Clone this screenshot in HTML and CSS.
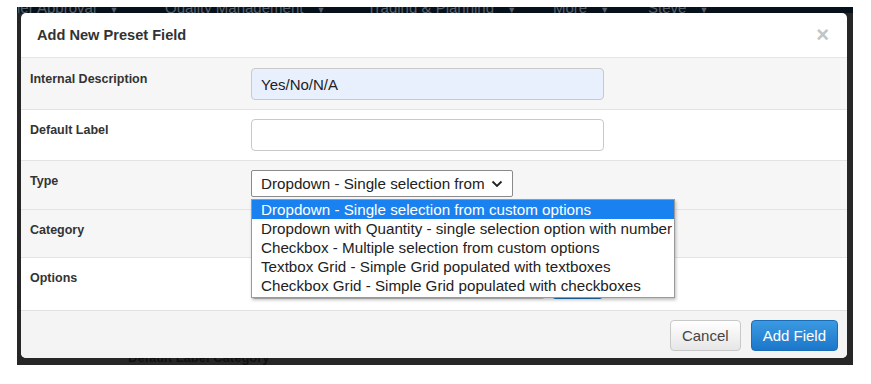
FILE: index.html
```html
<!DOCTYPE html>
<html lang="en">

<head>
  <meta charset="UTF-8">
  <meta name="viewport" content="width=device-width,initial-scale=1.0">
  <title>Add New Preset Field</title>
  <link rel="stylesheet" href="styles.css">
</head>

<body>
  <div class="backdrop">
    <div class="nav">
      <span class="nav-item first">ier Approval <i>&#9660;</i></span>
      <span class="nav-item">Quality Management <i>&#9660;</i></span>
      <span class="nav-item">Trading &amp; Planning <i>&#9660;</i></span>
      <span class="nav-item">More <i>&#9660;</i></span>
      <span class="nav-item">Steve <i>&#9660;</i></span>
    </div>
    <div class="page-behind">Default Label Category</div>

    <div class="modal">
      <div class="modal-header">
        <h4>Add New Preset Field</h4>
        <span class="close">&times;</span>
      </div>

      <div class="modal-body">
        <div class="form-row grey r1">
          <label>Internal Description</label>
          <div><input type="text" class="text-input autofill" value="Yes/No/N/A"></div>
        </div>
        <div class="form-row r2">
          <label>Default Label</label>
          <div><input type="text" class="text-input" value=""></div>
        </div>
        <div class="form-row grey r3">
          <label>Type</label>
          <div>
            <div class="fake-select">
              <span>Dropdown - Single selection from</span>
              <svg width="12" height="8" viewBox="0 0 12 8"><path d="M1.5 1.5 L6 6 L10.5 1.5" fill="none" stroke="#222" stroke-width="1.8"/></svg>
            </div>
          </div>
        </div>
        <div class="form-row grey r4">
          <label>Category</label>
          <div></div>
        </div>
        <div class="form-row r5">
          <label>Options</label>
          <div class="options-line">
            <input type="text" class="text-input short" value="">
            <span class="small-btn"></span>
          </div>
        </div>
      </div>

      <div class="modal-footer">
        <button class="btn">Cancel</button>
        <button class="btn btn-primary">Add Field</button>
      </div>

      <!-- open dropdown list of the Type select -->
      <ul class="select-list">
        <li class="active">Dropdown - Single selection from custom options</li>
        <li>Dropdown with Quantity - single selection option with number</li>
        <li>Checkbox - Multiple selection from custom options</li>
        <li>Textbox Grid - Simple Grid populated with textboxes</li>
        <li>Checkbox Grid - Simple Grid populated with checkboxes</li>
      </ul>
    </div>
  </div>
</body>

</html>
```

FILE: styles.css
```css
body {
  margin: 0;
  padding: 0;
  background: #fff;
  font-family: "Liberation Sans", Arial, sans-serif;
  color: #333;
}

.backdrop {
  position: relative;
  margin: 7px 0 0 17px;
  width: 836px;
  height: 358px;
  background: #262626;
  overflow: hidden;
}

.nav {
  display: flex;
  height: 6px;
  background: #07111b;
  font-size: 15px;
  line-height: 12px;
  color: #56606b;
  white-space: nowrap;
  overflow: hidden;
}

.nav-item {
  display: block;
  flex-shrink: 0;
  margin-top: -5px;
}

.nav-item i {
  font-style: normal;
  font-size: 9px;
  margin-left: 9px;
}

.nav-item.first { width: 148px; }
.nav-item:nth-child(2) { width: 202px; }
.nav-item:nth-child(3) { width: 186px; }
.nav-item:nth-child(4) { width: 95px; }

.page-behind {
  position: absolute;
  left: 111px;
  top: 343px;
  font-size: 13px;
  font-weight: bold;
  color: #111;
}

/* --------------------------------------------------------------
   modal
   -------------------------------------------------------------- */
.modal {
  position: absolute;
  left: 4px;
  top: 6px;
  width: 826px;
  background: #fff;
  border-radius: 5px;
}

.modal-header {
  display: flex;
  align-items: center;
  justify-content: space-between;
  height: 44px;
  padding: 0 18px 0 16px;
  border-bottom: 1px solid #e5e5e5;
}

.modal-header h4 {
  margin: 0;
  font-size: 14.6px;
  font-weight: bold;
  color: #333;
}

.close {
  font-size: 22px;
  font-weight: bold;
  color: #c4c4c4;
  line-height: 1;
}

.form-row {
  display: grid;
  grid-template-columns: 230px 1fr;
  box-sizing: border-box;
  border-bottom: 1px solid #e3e3e3;
  background: #fff;
}

.form-row.grey {
  background: #f6f6f6;
}

.form-row label {
  padding: 4px 0 0 9px;
  font-size: 12.5px;
  font-weight: bold;
  color: #333;
}

.r1 { height: 52px; padding-top: 10px; }
.r2 { height: 51px; padding-top: 9px; }
.r3 { height: 49px; padding-top: 9px; }
.r4 { height: 48px; padding-top: 9px; }
.r5 { height: 52px; padding-top: 9px; border-bottom: none; }

.text-input {
  box-sizing: border-box;
  width: 353px;
  height: 32px;
  padding: 0 9px;
  border: 1px solid #c9c9c9;
  border-radius: 4px;
  font-family: "Liberation Sans", Arial, sans-serif;
  font-size: 15px;
  color: #222;
  background: #fff;
}

.text-input.autofill {
  background: #e8f0fe;
}

.text-input.short {
  width: 295px;
}

.options-line {
  display: flex;
  align-items: flex-start;
  gap: 6px;
}

.small-btn {
  display: block;
  width: 51px;
  height: 32px;
  border-radius: 4px;
  background: #1f72b8;
}

.fake-select {
  box-sizing: border-box;
  display: flex;
  align-items: center;
  justify-content: space-between;
  width: 262px;
  height: 27px;
  padding: 0 9px 0 9px;
  border: 1px solid #8a8a8a;
  border-radius: 2px;
  background: #fff;
  font-size: 15.2px;
  color: #222;
}

.select-list {
  position: absolute;
  left: 230px;
  top: 186px;
  width: 424px;
  margin: 0;
  padding: 0 0 2px 0;
  list-style: none;
  box-sizing: border-box;
  background: #fff;
  border: 1px solid #9a9a9a;
  box-shadow: 1px 2px 3px rgba(0, 0, 0, 0.25);
  font-size: 15.2px;
  color: #222;
}

.select-list li {
  height: 19px;
  line-height: 19px;
  padding-left: 9px;
  white-space: nowrap;
}

.select-list li.active {
  background: #1a82f0;
  color: #fff;
}

.modal-footer {
  display: flex;
  justify-content: flex-end;
  gap: 10px;
  padding: 9px 9px 0 0;
  box-sizing: border-box;
  height: 48px;
  background: #f4f4f4;
  border-top: 1px solid #e0e0e0;
  border-radius: 0 0 5px 5px;
}

.btn {
  height: 31px;
  padding: 0 11px;
  border: 1px solid #c8c8c8;
  border-radius: 4px;
  background: linear-gradient(#ffffff, #e6e6e6);
  font-family: "Liberation Sans", Arial, sans-serif;
  font-size: 15px;
  color: #444;
}

.btn-primary {
  border-color: #1b6db8;
  background: linear-gradient(#3b9ae2, #1c77c9);
  color: #fff;
}
```
